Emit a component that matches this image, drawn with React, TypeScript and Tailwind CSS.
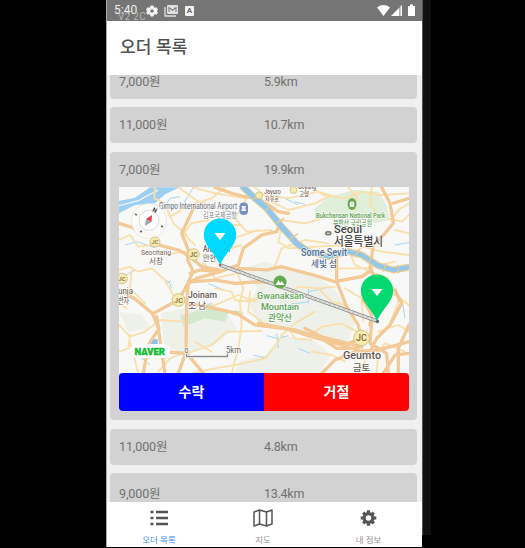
import React from "react";

const kr = "font-['Roboto','Noto_Sans_CJK_KR',sans-serif]";

function StatusBar() {
  return (
    <div className="relative flex h-[21px] shrink-0 items-center bg-[#757575] pl-[7px] pr-[6px] text-white">
      <span className="w-[23px] text-[12px] leading-[21px] text-[#f2f2f2]">5:40</span>
      <span className="absolute left-[11px] top-[12px] h-[9px] overflow-hidden whitespace-nowrap text-[10px] leading-[10px] tracking-[0.3px] text-[#b4b4b4]">V2 2C</span>
      <svg className="ml-[9px] h-[12px] w-[12px]" viewBox="0 0 24 24" fill="#f5f5f5">
        <path fillRule="evenodd" d="M9 1h6l.7 3.4 2 1.1 3.3-1 3 5-2.6 2.5 2.6 2.5-3 5-3.3-1-2 1.1L15 23H9l-.7-3.4-2-1.1-3.3 1-3-5L2.600 12 0 9.500l3-5 3.300 1 2-1.100zM12 8.500a3.500 3.500 0 100 7 3.500 3.500 0 000-7z" />
      </svg>
      <svg className="ml-[6px] h-[13px] w-[15px]" viewBox="0 0 15 13" fill="none" stroke="#e0e0e0">
        <path d="M1 3v9h11" strokeWidth="1.300" />
        <rect x="3" y="1" width="11" height="9" rx="1" fill="#e0e0e0" stroke="none" />
        <path d="M5 8V3.500l3.500 2.700L12 3.500V8" stroke="#808080" strokeWidth="1.100" />
      </svg>
      <span className="ml-[6px] flex h-[10px] w-[9px] items-center justify-center rounded-[1px] bg-[#f3f3f3] text-[8px] font-bold leading-none text-[#666]">A</span>
      <svg className="ml-auto h-[13px] w-[39px]" viewBox="0 0 39 13" fill="#fff">
        <path d="M0 3.500Q6.500-1.300 13 3.500L6.500 12z" />
        <path d="M14 12L22 4v8z" />
        <path d="M22 4l3-3v11h-3z" opacity=".45" />
        <path d="M24.300 1.500v10.500" stroke="#fff" strokeWidth="1.200" />
        <path d="M31 2h2V.5h3V2h2v10h-7z" />
      </svg>
    </div>
  );
}

function Labels({ price, distance }: { price: string; distance: string }) {
  return (
    <div className="flex h-[36px] items-center pl-[9px] text-[12.5px] leading-[18px] text-[#717171]">
      <span className="w-[145px] tracking-[-0.1px]">{price}</span>
      <span className="tracking-[-0.25px]">{distance}</span>
    </div>
  );
}

const minorRoads = [
  "M12 255L45 240L70 275L115 270",
  "M120 97L118 130L150 145L165 185L225 150L290 130L330 97",
  "M150 145L175 205L215 240",
  "M190 97L250 140L285 150M235 97L300 115L395 130",
  "M12 345L45 335L70 350L110 340L150 375L180 430",
  "M50 345L45 400L90 445",
  "M12 510L45 545L90 530L135 495L205 500",
  "M12 590L40 580L45 540M45 560L70 655M130 650L165 610L215 590",
  "M215 595L290 570L335 530L440 528",
  "M230 655L300 640L370 628L450 610L480 575L500 540L540 505L600 470",
  "M365 345L385 400L375 440L380 510L370 580L350 655",
  "M300 400L350 410L360 435L405 440",
  "M240 560L290 590M370 440L440 430M405 410L400 470L440 500",
  "M420 97L470 140L520 165L600 145L640 125",
  "M450 120L520 130L610 110L660 125",
  "M455 160L495 195L570 205L620 190L660 180",
  "M500 215L490 260L520 280L600 275L700 270",
  "M395 130L360 190L395 230L470 225",
  "M330 210L380 210M340 255L430 225M240 270L205 235L230 205L280 195",
  "M590 97L625 120L690 130L740 110L800 120L882 115",
  "M700 97L725 125L720 165M770 97L765 150L790 180",
  "M882 145L850 165L830 195M840 225L882 235M820 190L860 200L882 180",
  "M480 335L500 280L570 255L640 265",
  "M520 420L550 395L610 400L660 395M610 400L650 440L690 450",
  "M700 280L720 330L765 350L820 370M670 340L750 340L840 320",
  "M720 290L745 275L800 290L882 300",
  "M690 400L740 430L745 500M840 420L882 450M835 395L850 440L820 520",
  "M580 545L620 515L680 505L725 530M590 590L650 600L690 620",
  "M520 520L540 550L590 555M790 530L850 510L882 530",
  "M720 655L750 620L740 580M785 655L790 590L810 565L870 590",
  "M12 445L35 460M290 455L370 420L420 440M145 300L210 290",
  "M265 320L300 370L385 350M380 270L330 285L300 260",
];

const majorRoads = [
  "M12 205L45 215L110 240L130 270L190 285L225 305L260 335L315 345",
  "M240 150L200 235L220 285L218 315L235 350L220 380L215 450L213 590L190 655",
  "M225 355L255 345L315 350",
  "M12 405L60 432L112 475L132 520L100 570L85 655",
  "M125 485L138 575L150 655",
  "M115 475L190 435L220 385L245 370L315 350L370 330L385 280L440 240L485 230L495 205L470 175",
  "M220 445L275 455L365 475L420 510L540 525L620 550L665 580L730 580",
  "M430 505L510 520L590 545L700 575M570 520L620 545L740 575",
  "M235 380L300 375L360 385L430 380L490 385",
  "M370 340L455 345L500 335L595 360L660 380L740 365L770 345",
  "M665 310L665 380L695 455L730 510L740 560",
  "M300 97L350 115L390 125L430 130L490 170L520 175",
  "M800 97L825 145L835 205L810 235L775 270L765 340L790 390",
  "M835 145L882 130M770 500L765 565L815 595L820 655",
  "M745 435L770 480L765 510M840 405L860 445L825 510L785 550L770 580",
  "M620 655L660 615L720 590L790 585L882 560",
  "M882 595L840 600L805 655M882 510L850 580L850 655",
  "M735 550L690 570M70 580L135 590L215 595L265 655",
];

function Roads() {
  return (
    <g transform="translate(115 155) scale(.33333)" fill="none" strokeLinejoin="round" strokeLinecap="round">
      {minorRoads.map((d) => <path key={d} d={d} stroke="#f9dfab" strokeWidth="5.500" />)}
      {majorRoads.map((d) => <path key={d} d={d} stroke="#f2c48f" strokeWidth="9.500" />)}
      {majorRoads.map((d) => <path key={d + "c"} d={d} stroke="#f5cf9e" strokeWidth="3" />)}
    </g>
  );
}

function MapLabel({ x, y, w, size, color, children, weight = 500 }: { x: number; y: number; w: number; size: number; color: string; children: string; weight?: number }) {
  return (
    <text x={x} y={y} fontSize={size} textLength={w} lengthAdjust="spacingAndGlyphs" fill={color} fontWeight={weight} stroke="#fff" strokeWidth="1.600" strokeOpacity=".8" paintOrder="stroke">{children}</text>
  );
}

function Junction({ x, y, r, label = "JC" }: { x: number; y: number; r: number; label?: string }) {
  return (
    <g>
      <circle cx={x} cy={y} r={r} fill="#f8ebb0" stroke="#cdbf88" strokeWidth=".9" />
      <text x={x} y={y + r * 0.4} textAnchor="middle" fontSize={r * 1.15} fontWeight="500" fill="#7d6c3a">{label}</text>
    </g>
  );
}

function Pin({ x, y, fill }: { x: number; y: number; fill: string }) {
  return (
    <g transform={`translate(${x} ${y})`}>
      <path d="M0-46.500A16.200 16.200 0 0116.200-30.500C16.200-19 5-12 0 0C-5-12-16.200-19-16.200-30.500A16.200 16.200 0 010-46.500z" fill={fill} />
      <path d="M-5.500-32H5.500L0-25z" fill="#fff" />
    </g>
  );
}

function RouteMap() {
  return (
    <svg className={"block h-[186px] w-[290px] " + kr} viewBox="119 187 290 186">
      <rect x="119" y="187" width="290" height="186" fill="#f8f8f6" />
      <g transform="translate(115 155) scale(.33333)">
        <path d="M140 475L205 460L340 480L365 520L290 575L225 595L150 580L140 520zM370 345L450 320L540 350L610 365L665 410L720 505L700 560L600 540L430 505L400 440L430 400zM370 620L450 600L500 540L600 560L650 600L610 655H360zM12 470L80 480L110 520L40 530z" fill="#edf1ea" />
        <path d="M600 160L640 125L720 105L790 110L815 150L825 195L780 205L730 180L660 190L600 195z" fill="#e0efd9" />
        <path d="M195 480L240 470L290 440L300 465L340 475L330 500L270 490L205 515zM360 465L385 470L380 485L350 480z" fill="#d3e9cd" />
        <path d="M12 138L60 128L105 97H195L150 118L120 145L60 150L12 175z" fill="#9ccff2" />
        <path d="M12 152L70 137L130 105" fill="none" stroke="#eff5f7" strokeWidth="4" />
        <g fill="none" stroke="#a9d3ee" strokeWidth="3">
          <path d="M145 160l20-30 30-5M235 97l-30 50-65 15M145 370l20 15 5 15M150 385l18-8M30 270l35-10 55 18M12 370l50-25M270 300l-10 45M485 535l5 45M485 550l-30-8M490 550l30-8M415 600l40 10M550 580l35 15M580 400v45M580 410l50-10M520 450l60-10M860 430l10 60M840 270l45-8M280 385l45 20M70 600l35 30M860 560l-15 35M510 130l40 20M540 140l30 8" />
        </g>
        <path d="M108 553h20v20h-25z" fill="#82c4ef" />
      </g>
      <Roads />
      <g transform="translate(115 155) scale(.33333)" fill="none" strokeLinejoin="round">
        <path d="M380 92L420 130L455 160L500 215L545 265L580 290L640 305L700 290L740 300L790 332L835 345L890 335" stroke="#ebcc96" strokeWidth="21" />
        <path d="M380 92L420 130L455 160L500 215L545 265L580 290" stroke="#8fc8ec" strokeWidth="16" />
        <path d="M580 290L640 305L700 290L740 300L790 332L835 345L890 335" stroke="#8fc8ec" strokeWidth="13" />
        <path d="M412 135l20-18M450 167l20-16M484 205l24-16M525 252l24-16M720 302l14-19M758 325l15-21M805 350l8-25M850 355l-2-25" stroke="#e8c892" strokeWidth="4" />
      </g>
      <path d="M220 265L377 321" stroke="#858585" strokeWidth="3.500" />
      <path d="M220 265L377 321" stroke="#e4e4e0" strokeWidth="2.100" />
      <path d="M220 265L377 321" stroke="#b0b0ad" strokeWidth=".7" strokeDasharray="3 2" />

      <MapLabel x={159} y={209} w={78} size={9.5} color="#626a73" weight={400}>Gimpo International Airport</MapLabel>
      <MapLabel x={203} y={217.5} w={34} size={7.5} color="#7d8590" weight={400}>김포국제공항</MapLabel>
      <rect x="239.500" y="202.500" width="8.500" height="12.500" rx="4" fill="#7a8fc2" />
      <path d="M241.500 206h4.500l-1 3h1v2h-4.500v-2h1z" fill="#eef2ff" />
      <Junction x={259} y={195.5} r={3.5} label="" />
      <Junction x={293.5} y={190} r={3.5} label="" />
      <MapLabel x={264} y={194} w={17} size={6.5} color="#876c60">Jayuro</MapLabel>
      <MapLabel x={265} y={201} w={14} size={6} color="#876c60">자유로</MapLabel>
      <MapLabel x={298} y={188.5} w={18} size={6.5} color="#6f625c">Goyang</MapLabel>
      <MapLabel x={299} y={196} w={10} size={6} color="#6f625c">고양</MapLabel>
      <ellipse cx="352" cy="204" rx="4.500" ry="6" fill="#65ac52" />
      <path d="M349.500 207v-4q2.500-4 5 0v4zM352 202v3" fill="#fff" stroke="#65ac52" strokeWidth=".5" />
      <MapLabel x={316} y={217.5} w={69} size={7.5} color="#5da052">Bukchansan National Park</MapLabel>
      <MapLabel x={333} y={225.5} w={39} size={7.5} color="#69a35e">북한산 국립공원</MapLabel>
      <rect x="325" y="231" width="6.500" height="4.500" rx="2" fill="#858078" /><path d="M327 233.200h2.500" stroke="#eee" />
      <MapLabel x={334} y={232.5} w={28} size={11.5} color="#444">Seoul</MapLabel>
      <MapLabel x={334} y={245.5} w={49} size={12.5} color="#484848">서울특별시</MapLabel>
      <MapLabel x={301} y={256} w={46} size={10} color="#516b91">Some Sevit</MapLabel>
      <MapLabel x={311} y={266.5} w={26} size={9.5} color="#546e91">세빛 섬</MapLabel>

      <circle cx="149" cy="221" r="17.500" fill="#fbfbfa" fillOpacity=".9" stroke="#e1e0dc" strokeWidth=".7" />
      <circle cx="149" cy="220.500" r="10" fill="#fff" stroke="#d0cfcc" strokeWidth=".7" />
      <path d="M152 215l-.5 7-5.500-3z" fill="#ef3b45" /><path d="M146 219l5.500 3-6.500 4z" fill="#a2a4a4" />
      <path d="M135 214l2 1M161 226l2 1M140 232l2-1" stroke="#666" strokeWidth="1.500" />
      <text x="152" y="211" fontSize="6" fontWeight="bold" fill="#333" transform="rotate(25 152 211)">N</text>
      <Junction x={155} y={242} r={5} />
      <Junction x={193.5} y={254.5} r={5.8} />
      <Junction x={122} y={278.5} r={5.3} />
      <Junction x={178.5} y={300} r={6.4} />
      <Junction x={361.5} y={338} r={7.8} />
      <MapLabel x={141} y={255} w={30} size={8} color="#71615b" weight={400}>Seochang</MapLabel>
      <MapLabel x={149} y={263.5} w={14} size={7.5} color="#71615b" weight={400}>서창</MapLabel>
      <MapLabel x={203} y={252} w={27} size={8.5} color="#6f5d58">Anhyeon</MapLabel>
      <MapLabel x={203} y={261} w={13} size={8.5} color="#6f5d58" weight={400}>안현</MapLabel>
      <MapLabel x={118} y={294} w={15} size={9} color="#615550" weight={400}>unja</MapLabel>
      <MapLabel x={118} y={303.5} w={11} size={9} color="#615550" weight={400}>반자</MapLabel>
      <MapLabel x={188} y={298} w={29} size={9.5} color="#655852">Joinam</MapLabel>
      <MapLabel x={188} y={309} w={18} size={9.5} color="#655852" weight={400}>조 남</MapLabel>

      <circle cx="280" cy="282" r="6.500" fill="#61ac50" /><path d="M275.500 285l3-5 2 3 1.200-2 2.800 4z" fill="#fff" />
      <MapLabel x={257} y={298.5} w={47} size={9} color="#62a359">Gwanaksan</MapLabel>
      <MapLabel x={261} y={310} w={38} size={9} color="#5aa052">Mountain</MapLabel>
      <MapLabel x={268} y={321} w={24} size={9.5} color="#5aa052">관악산</MapLabel>
      <MapLabel x={343} y={359} w={38} size={10.5} color="#635752">Geumto</MapLabel>
      <MapLabel x={353} y={371} w={17} size={9.5} color="#655852">금토</MapLabel>
      <rect x="130" y="344" width="40" height="14" rx="7" fill="#fff" />
      <text x="134.500" y="354.500" fontSize="9.500" textLength="30.500" lengthAdjust="spacingAndGlyphs" fill="#16bd37" stroke="#16bd37" strokeWidth=".4" fontWeight="900">NAVER</text>
      <path d="M186.500 352v4.500h41V353" fill="none" stroke="#fff" strokeWidth="3" />
      <path d="M186.500 352v4.500h41V353" fill="none" stroke="#8a8a8a" strokeWidth="1.300" />
      <MapLabel x={184.5} y={352.5} w={4} size={8} color="#666" weight={400}>0</MapLabel>
      <MapLabel x={226} y={352.5} w={15} size={8.5} color="#666" weight={400}>5km</MapLabel>
      <Pin x={220} y={265} fill="#00d9ff" />
      <Pin x={377} y={321} fill="#03d970" />
      <circle cx="220" cy="265" r="1.300" fill="#a96d62" /><circle cx="377.500" cy="321.500" r="1.800" fill="#607468" />
    </svg>
  );
}

function Navigation() {
  return (
    <nav className="grid h-[45px] shrink-0 grid-cols-3 bg-white pr-[3px] text-[8.5px] leading-[10px] text-[#949494]">
      <div className="flex flex-col items-center pt-[7px] text-[#428cf8]">
        <svg className="h-[18px] w-[18px]" viewBox="0 0 18 18" fill="none" stroke="#555" strokeWidth="2.300">
          <path d="M.5 3h3M6 3h12M.5 9h3M6 9h12M.5 15h3M6 15h12" />
        </svg>
        <span className="mt-[8px]">오더 목록</span>
      </div>
      <div className="flex flex-col items-center pt-[7px]">
        <svg className="h-[18px] w-[20px]" viewBox="0 0 20 18" fill="none" stroke="#555" strokeWidth="1.500" strokeLinejoin="round">
          <path d="M1 3l5.500-2 7 2L19 1v14l-5.500 2-7-2L1 17zM6.500 1v14M13.500 3v14" />
        </svg>
        <span className="mt-[8px]">지도</span>
      </div>
      <div className="flex translate-x-[1.5px] flex-col items-center pt-[7px]">
        <svg className="h-[18px] w-[18px]" viewBox="0 0 18 18">
          <path d="M9 1.200v15.600M1.200 9h15.600M3.700 3.700l10.600 10.600M14.300 3.700L3.700 14.300" stroke="#555" strokeWidth="3.200" />
          <circle cx="9" cy="9" r="4.400" fill="#fff" stroke="#555" strokeWidth="3.200" />
        </svg>
        <span className="mt-[8px]">내 정보</span>
      </div>
    </nav>
  );
}

export default function App() {
  return (
    <main className={"flex h-[548px] w-[525px] overflow-hidden bg-black pl-[106px] " + kr}>
      <div className="flex h-[547px] w-[316px] shrink-0 flex-col overflow-hidden border-l border-[#aaa] bg-[#f0f0f0]">
        <StatusBar />
        <header className="flex h-[54px] shrink-0 items-center bg-white pl-[13px] text-[17px] font-medium tracking-[0.15px] text-[#505050]">오더 목록</header>
        <div className="flex h-[427px] shrink-0 flex-col gap-[8.5px] overflow-hidden pl-[3px] pr-[5px]">
          <section className="flex h-[23.5px] shrink-0 flex-col justify-end overflow-hidden rounded-b-[4px] bg-[#d2d2d2]"><div className="-mb-[1px]"><Labels price="7,000원" distance="5.9km" /></div></section>
          <section className="h-[36px] shrink-0 rounded-[4px] bg-[#d2d2d2]"><Labels price="11,000원" distance="10.7km" /></section>
          <section className="h-[268.5px] shrink-0 rounded-[4px] bg-[#d2d2d2]">
            <Labels price="7,000원" distance="19.9km" />
            <div className="-mt-[0.5px] ml-[9px] w-[290px]">
              <RouteMap />
              <div className="grid h-[38px] grid-cols-2 overflow-hidden rounded-[4px] text-[14px] font-bold text-white">
                <button className="bg-[#0000ff]">수락</button>
                <button className="bg-[#ff0000]">거절</button>
              </div>
            </div>
          </section>
          <section className="h-[36px] shrink-0 rounded-[4px] bg-[#d2d2d2]"><Labels price="11,000원" distance="4.8km" /></section>
          <section className="h-[36px] shrink-0 rounded-t-[4px] bg-[#d2d2d2] pt-[3px]"><Labels price="9,000원" distance="13.4km" /></section>
        </div>
        <Navigation />
      </div>
      <div className="h-[535px] w-[9px] border-l border-[#555] bg-[#101010]" />
    </main>
  );
}
